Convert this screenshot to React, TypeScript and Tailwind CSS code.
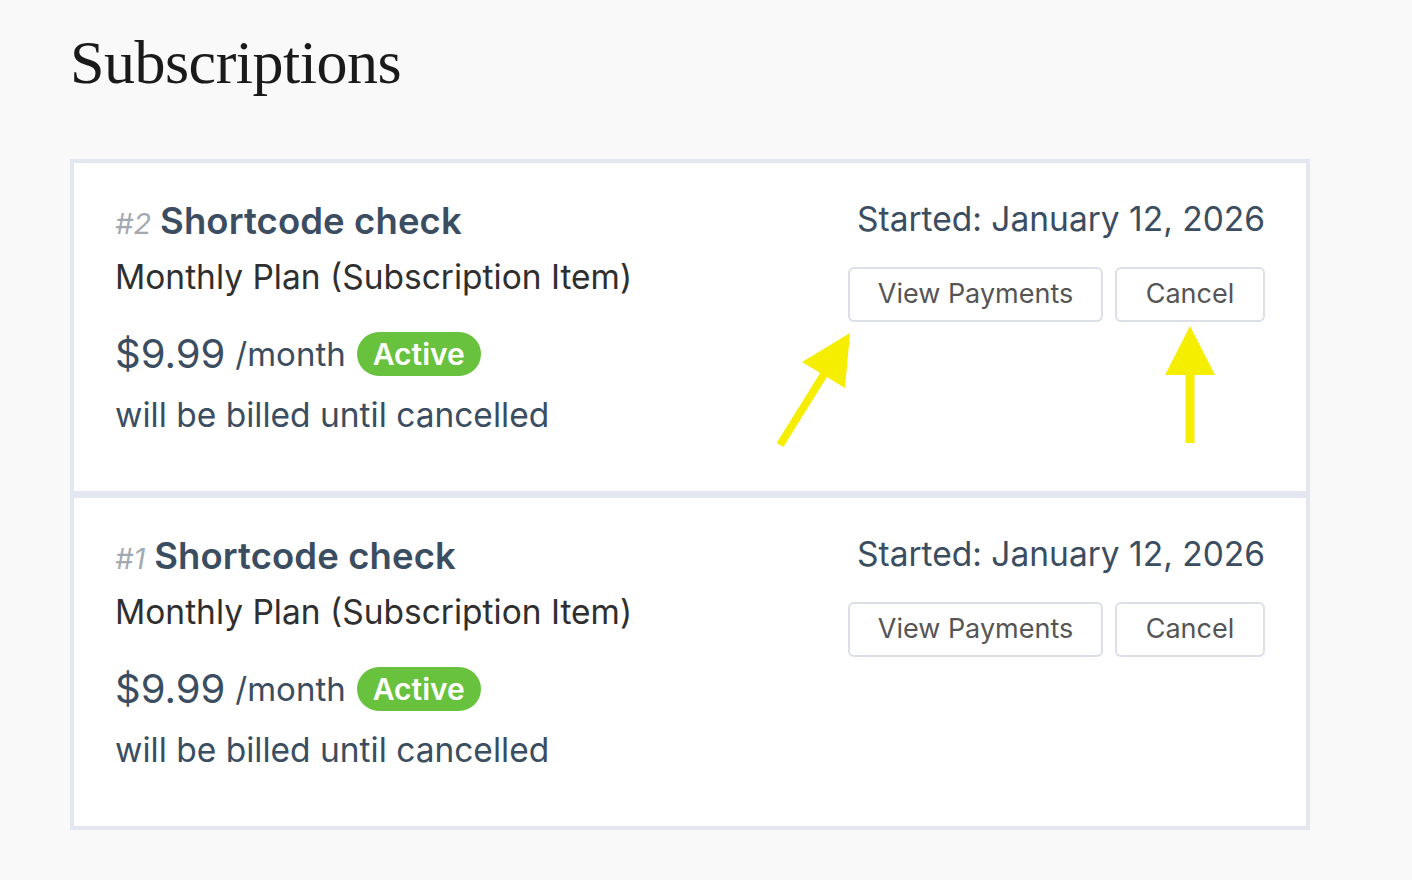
import React from "react";

const items = [
  { id: 2, arrows: true },
  { id: 1, arrows: false },
];

function Item({ id }: { id: number }) {
  return (
    <div className="flex justify-between bg-white pl-[41px] pr-[41px] pt-[36px] pb-[56px]">
      <div className="flex flex-col">
        <div className="flex items-baseline h-[44px] leading-[44px]">
          <span className="italic text-[29px] text-[#a3a9b1] mr-[9px]">#{id}</span>
          <span className="font-semibold text-[36.5px] text-[#3b4d61] tracking-[0.1px]">Shortcode check</span>
        </div>
        <div className="mt-[14px] h-[40px] leading-[40px] text-[33.5px] text-[#2f2f2f]">
          Monthly Plan (Subscription Item)
        </div>
        <div className="mt-[35px] flex items-center h-[44px]">
          <span className="text-[40px] leading-[44px] text-[#3b4d61]">$9.99</span>
          <span className="ml-[10px] text-[33px] leading-[44px] text-[#3b4d61]">/month</span>
          <span className="ml-[11px] h-[44px] px-[16px] rounded-[22px] bg-[#68c23e] text-white font-semibold text-[30px] leading-[44px]">
            Active
          </span>
        </div>
        <div className="mt-[19px] h-[40px] leading-[40px] text-[33.5px] text-[#3b4d61]">
          will be billed until cancelled
        </div>
      </div>
      <div className="flex flex-col items-end">
        <div className="h-[40px] leading-[40px] text-[33.5px] text-[#3b4d61]">
          Started: January 12, 2026
        </div>
        <div className="mt-[28px] flex gap-[12px]">
          <button className="w-[255px] h-[55px] border-2 border-[#dcdfe6] rounded-[6px] bg-white text-[27px] text-[#555555]">
            View Payments
          </button>
          <button className="w-[150px] h-[55px] border-2 border-[#dcdfe6] rounded-[6px] bg-white text-[27px] text-[#555555]">
            Cancel
          </button>
        </div>
      </div>
    </div>
  );
}

export default function App() {
  return (
    <div
      className="relative min-h-[880px] w-full bg-[#f9f9f9] pl-[70px] pt-[24px]"
      style={{ fontFamily: "Inter, 'Noto Sans', sans-serif" }}
    >
      <h1
        className="text-[62px] leading-[76px] text-[#1a1a1a] tracking-[-0.5px]"
        style={{ fontFamily: "'Liberation Serif', serif" }}
      >
        Subscriptions
      </h1>
      <div className="mt-[59px] w-[1240px] border-4 border-[#e3e8f0] bg-[#e3e8f0] flex flex-col gap-[7px]">
        {items.map((it) => (
          <Item key={it.id} id={it.id} />
        ))}
      </div>
      <svg
        className="absolute left-0 top-0 pointer-events-none"
        width="1412"
        height="880"
        viewBox="0 0 1412 880"
      >
        <line x1="780" y1="445" x2="826" y2="371" stroke="#f5ee00" strokeWidth="8" />
        <polygon points="850,333 802,362 845,388" fill="#f5ee00" />
        <line x1="1190" y1="443" x2="1190" y2="370" stroke="#f5ee00" strokeWidth="9" />
        <polygon points="1190,326 1165,375 1215,375" fill="#f5ee00" />
      </svg>
    </div>
  );
}
